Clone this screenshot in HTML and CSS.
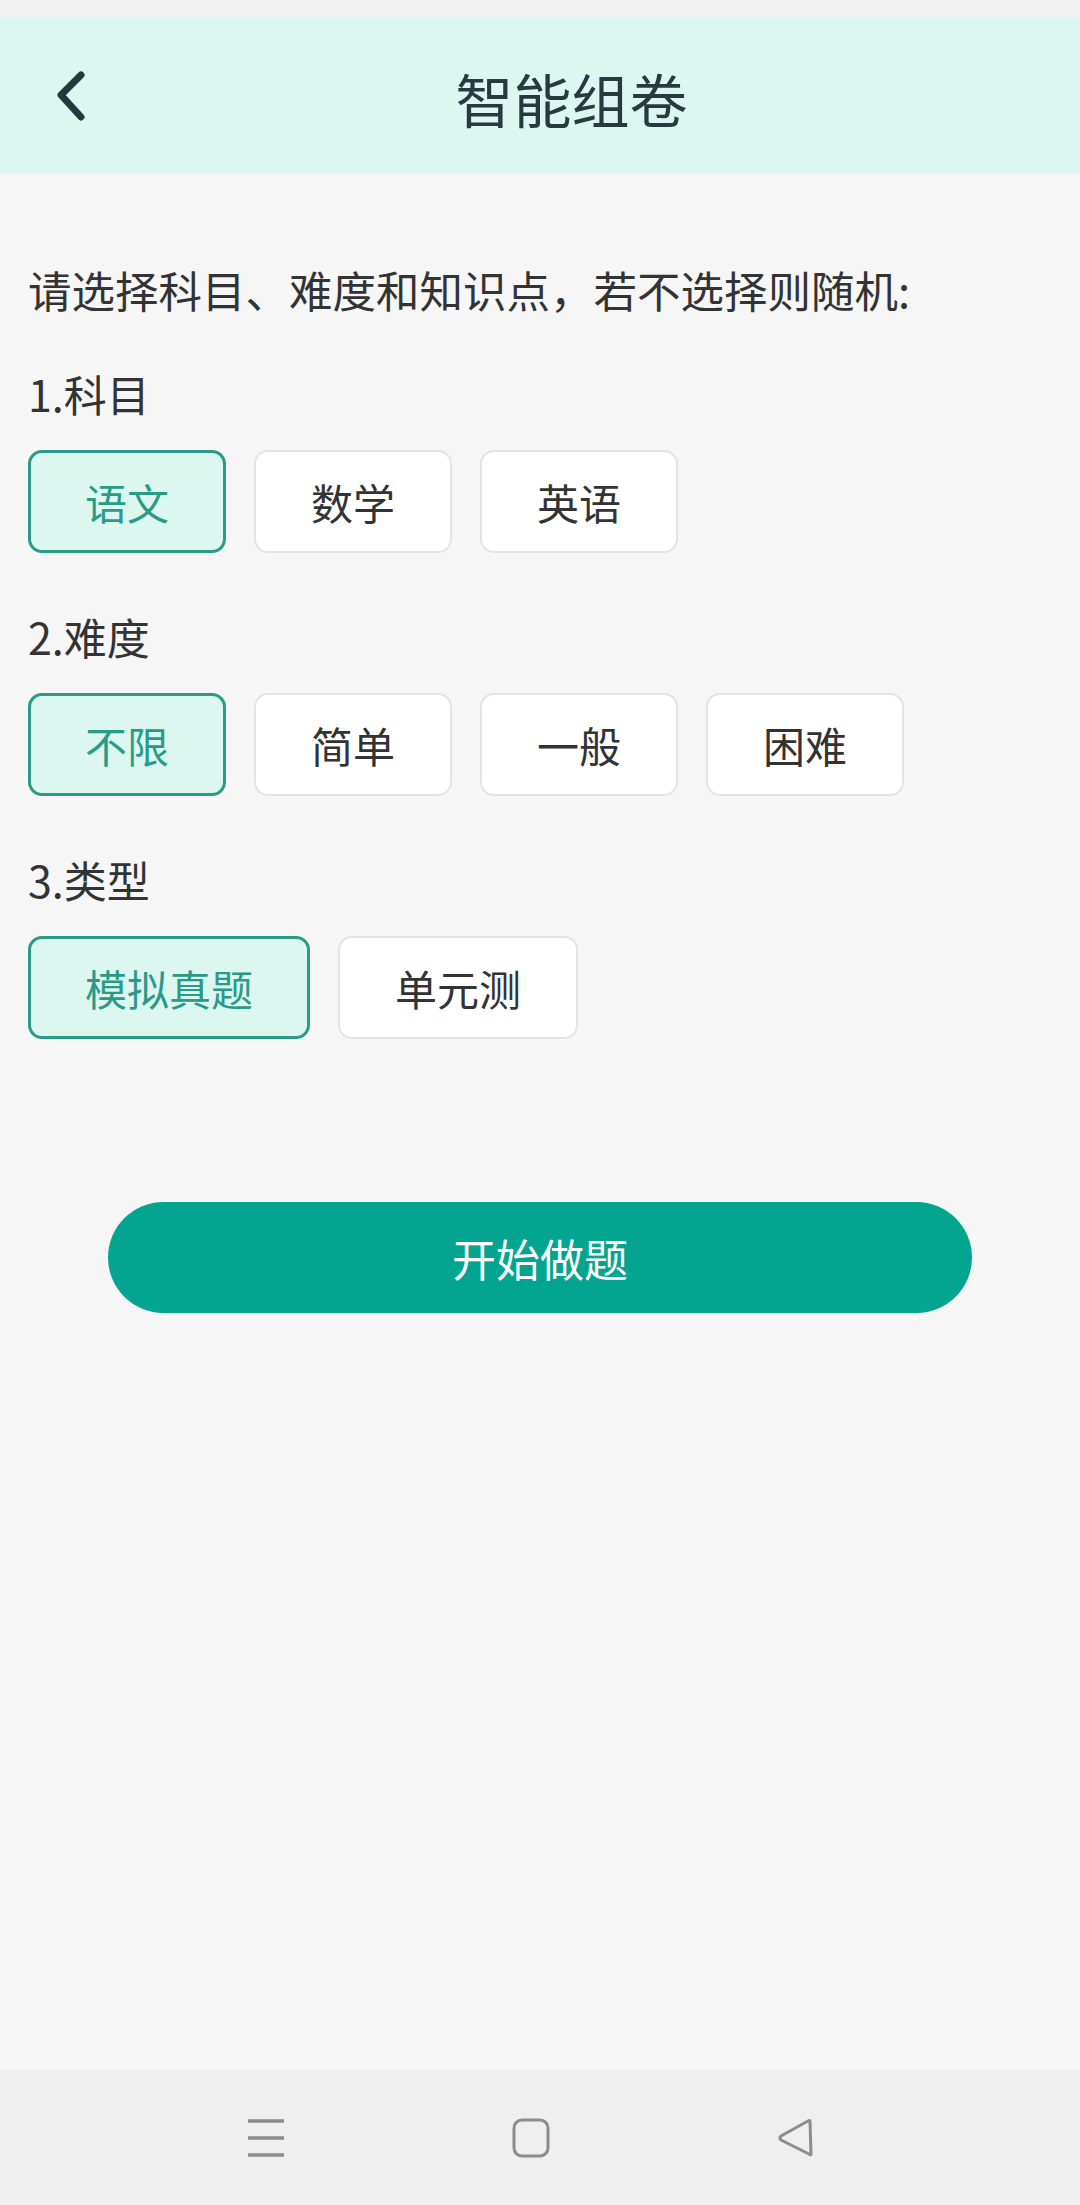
FILE: index.html
```html
<!DOCTYPE html>
<html lang="zh-CN">
<head>
<meta charset="utf-8">
<title>智能组卷</title>
<link rel="stylesheet" href="styles.css">
</head>
<body>
<div class="page">
  <div class="status"></div>
  <header class="header">
    <div class="back">
      <svg width="34" height="56" viewBox="0 0 34 56"><path d="M26 6 L6 26 L26 48" fill="none" stroke="#1f3a40" stroke-width="7" stroke-linecap="round" stroke-linejoin="round"/></svg>
    </div>
    <h1 class="title">智能组卷</h1>
  </header>
  <main class="content">
    <p class="intro">请选择科目、难度和知识点，若不选择则随机:</p>

    <div class="label">1.科目</div>
    <div class="row">
      <div class="opt sel">语文</div>
      <div class="opt">数学</div>
      <div class="opt">英语</div>
    </div>

    <div class="label">2.难度</div>
    <div class="row">
      <div class="opt sel">不限</div>
      <div class="opt">简单</div>
      <div class="opt">一般</div>
      <div class="opt">困难</div>
    </div>

    <div class="label">3.类型</div>
    <div class="row">
      <div class="opt sel">模拟真题</div>
      <div class="opt">单元测</div>
    </div>

    <div class="start-wrap">
      <div class="start">开始做题</div>
    </div>
  </main>
  <nav class="navbar">
    <svg class="nav-ico" width="40" height="40" viewBox="0 0 40 40"><path d="M2 3 H38 M2 20 H38 M2 37 H38" stroke="#8c8c8c" stroke-width="3.5"/></svg>
    <svg class="nav-ico" width="40" height="40" viewBox="0 0 40 40"><rect x="3" y="2" width="34" height="36" rx="8" fill="none" stroke="#8c8c8c" stroke-width="3"/></svg>
    <svg class="nav-ico" width="40" height="40" viewBox="0 0 40 40"><path d="M34 3 L35 36 Q35 38 33 36 L5 22 Q3 20 5 18 L32 3 Q34 2 34 3 Z" fill="none" stroke="#8c8c8c" stroke-width="3" stroke-linejoin="round"/></svg>
  </nav>
</div>
</body>
</html>
```

FILE: styles.css
```css
html, body {
  margin: 0;
  padding: 0;
}
body {
  background: #f6f6f6;
  font-family: "Noto Sans CJK SC", "Noto Sans", sans-serif;
  color: #333;
}
.page {
  width: 1080px;
  min-height: 2205px;
  display: flex;
  flex-direction: column;
}
.status {
  height: 17px;
  background: #f1f1f1;
}
.header {
  height: 157px;
  background: #dcf7f0;
  display: flex;
  align-items: center;
  padding-left: 55px;
  box-sizing: border-box;
}
.back {
  width: 34px;
  height: 56px;
  display: flex;
  margin-top: 2px;
}
.title {
  flex: 1;
  margin: 0;
  padding-right: 26px;
  text-align: center;
  font-size: 58px;
  font-weight: 400;
  color: #253b40;
  line-height: 1;
  margin-top: 4px;
}
.content {
  flex: 1;
  padding: 0 28px;
  display: flex;
  flex-direction: column;
}
.intro {
  margin: 86px 0 0 0;
  font-size: 43.5px;
  line-height: 60px;
  color: #333;
}
.label {
  font-size: 43px;
  line-height: 60px;
  color: #333;
  margin-top: 53px;
}
.intro + .label {
  margin-top: 43px;
}
.row {
  display: flex;
  gap: 28px;
  margin-top: 27px;
}
.opt {
  height: 103px;
  box-sizing: border-box;
  padding: 0 55px;
  border: 2px solid #e4e4e4;
  border-radius: 14px;
  background: #fff;
  display: flex;
  align-items: center;
  justify-content: center;
  font-size: 42px;
  color: #333;
}
.opt.sel {
  border: 3px solid #2a9a89;
  padding: 0 54px;
  background: #dcf7f0;
  color: #2a9a88;
}
.start-wrap {
  margin-top: 163px;
  display: flex;
  justify-content: center;
}
.start {
  width: 864px;
  height: 111px;
  border-radius: 56px;
  background: #03a590;
  color: #fff;
  font-size: 44px;
  display: flex;
  align-items: center;
  justify-content: center;
}
.navbar {
  height: 135px;
  background: #efefef;
  display: flex;
  align-items: center;
  justify-content: center;
  gap: 225px;
  padding-right: 18px;
}
.nav-ico {
  display: block;
}
```
